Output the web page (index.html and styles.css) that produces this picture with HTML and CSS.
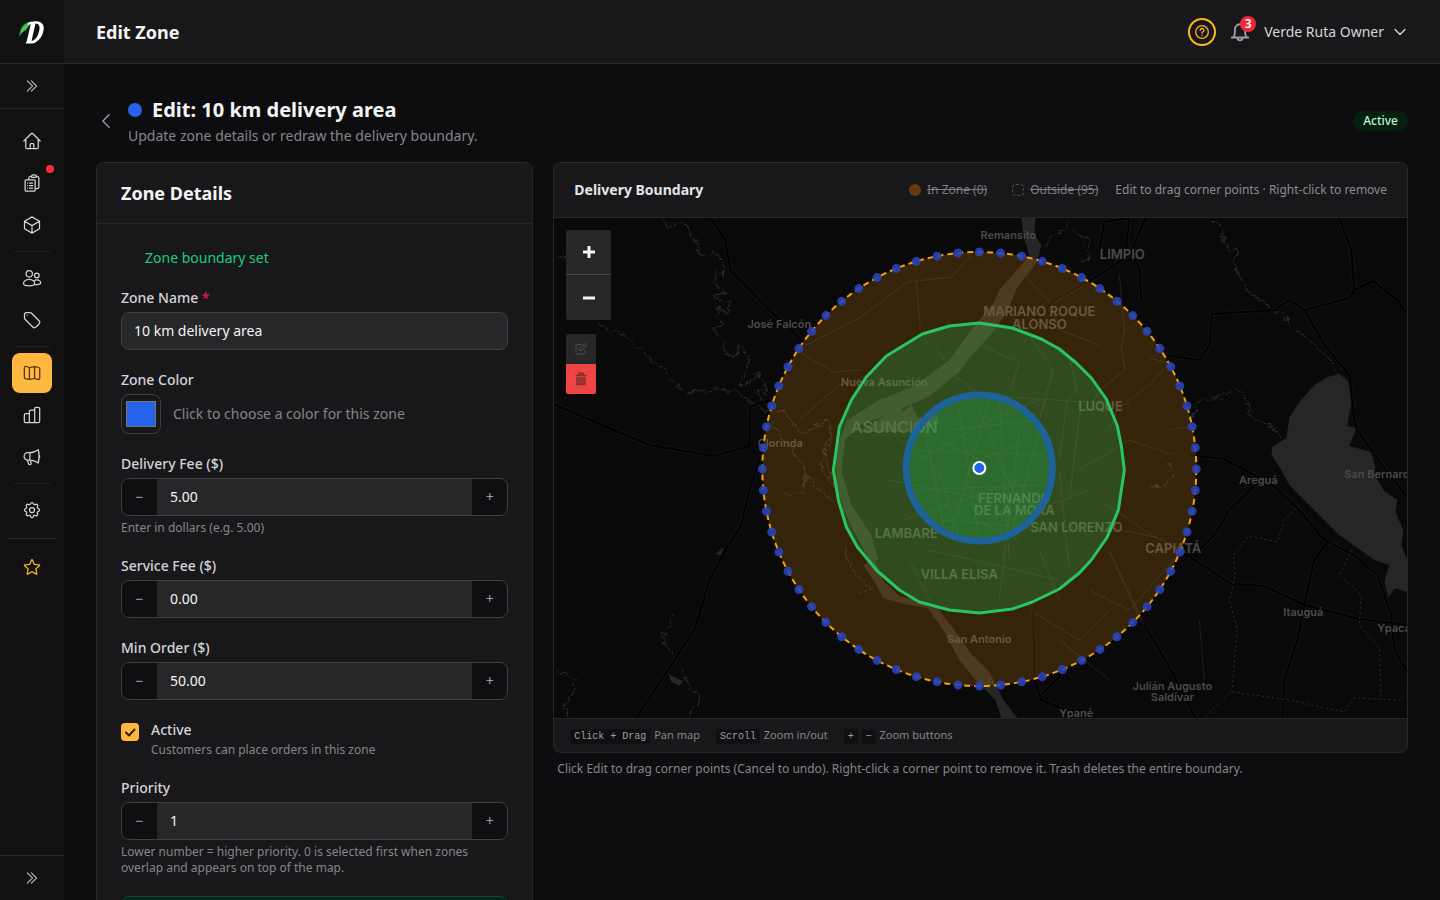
FILE: index.html
```html
<!DOCTYPE html>
<html lang="en">
<head>
<meta charset="utf-8">
<title>Edit Zone</title>
<meta name="viewport" content="width=device-width, initial-scale=1">
<link rel="stylesheet" href="styles.css">
</head>
<body>
<div class="app">
  <aside class="sidebar">
    <a class="logo" href="#" aria-label="Home">
      <svg width="26" height="26" viewBox="0 0 26 26" aria-hidden="true">
        <path d="M0.500 18C0 10 4 3 13 2.500C11 5 9 9 7 11C4.500 13 2 14 0.500 18Z" fill="#2f9e44"/>
        <path d="M1.500 14C3 9 6 5 12 3C9 7 6 11 1.500 14Z" fill="#55c95f"/>
        <path fill-rule="evenodd" d="M9 4C13 1.500 23 1 24.500 7C26 14 20 24 13 24.500H6.500C9 22 11 13 12.500 5.500C11.500 5 10.500 5 9 6ZM16.500 4.500L12.500 22C17 22 21 13 20.500 8C20.200 5.500 18.500 4.500 16.500 4.500Z" fill="#fff"/>
        <path d="M13.500 4L9 23.500" stroke="#fff" stroke-width="3"/>
      </svg>
    </a>
    <button class="expand" type="button" aria-label="Expand sidebar">
      <svg class="icon-sm" viewBox="0 0 24 24"><path d="m5.250 4.500 7.500 7.500-7.500 7.500m6-15 7.500 7.500-7.500 7.500"/></svg>
    </button>
    <nav class="nav">
      <a class="nav-item" href="#" aria-label="Dashboard"><svg class="icon" viewBox="0 0 24 24"><path d="m2.250 12 8.954-8.955c.44-.439 1.152-.439 1.591 0L21.750 12M4.500 9.750v10.125c0 .621.504 1.125 1.125 1.125H9.750v-4.875c0-.621.504-1.125 1.125-1.125h2.250c.621 0 1.125.504 1.125 1.125V21h4.125c.621 0 1.125-.504 1.125-1.125V9.750M8.250 21h8.250"/></svg></a>
      <a class="nav-item" href="#" aria-label="Orders"><svg class="icon" viewBox="0 0 24 24"><path d="M9 12h3.750M9 15h3.750M9 18h3.750m3 .75H18a2.250 2.250 0 0 0 2.250-2.250V6.108c0-1.135-.845-2.098-1.976-2.192a48.424 48.424 0 0 0-1.123-.08m-5.801 0c-.065.21-.1.433-.1.664 0 .414.336.75.75.75h4.500a.75.75 0 0 0 .75-.75 2.250 2.250 0 0 0-.1-.664m-5.800 0A2.251 2.251 0 0 1 13.500 2.250H15c1.012 0 1.867.668 2.150 1.586m-5.800 0c-.376.023-.75.05-1.124.08C9.095 4.010 8.250 4.973 8.250 6.108V8.250m0 0H4.875c-.621 0-1.125.504-1.125 1.125v11.250c0 .621.504 1.125 1.125 1.125h9.750c.621 0 1.125-.504 1.125-1.125V9.375c0-.621-.504-1.125-1.125-1.125H8.250ZM6.750 12h.008v.008H6.750V12Zm0 3h.008v.008H6.750V15Zm0 3h.008v.008H6.750V18Z"/></svg><span class="nav-dot"></span></a>
      <a class="nav-item" href="#" aria-label="Products"><svg class="icon" viewBox="0 0 24 24"><path d="m21 7.500-9-5.250L3 7.500m18 0-9 5.250m9-5.250v9l-9 5.250M3 7.500l9 5.250M3 7.500v9l9 5.250m0-9v9"/></svg></a>
      <hr class="nav-sep">
      <a class="nav-item" href="#" aria-label="Customers"><svg class="icon" viewBox="0 0 24 24"><circle cx="8.700" cy="7" r="3.800"/><circle cx="17.800" cy="9" r="2.800"/><path d="M8.500 13.500C4.500 13.500 1.800 16.200 1.800 18.700C1.800 20.500 4.500 21.400 8.500 21.400S15.200 20.500 15.200 18.700C15.200 16.200 12.500 13.500 8.500 13.500ZM14.300 15.400C15.300 14.600 16.600 14.200 17.800 14.200C20.400 14.200 22.400 16 22.400 17.800C22.400 19.300 20.300 19.900 17.800 19.900C16.800 19.900 15.800 19.800 15 19.600"/></svg></a>
      <a class="nav-item" href="#" aria-label="Promotions"><svg class="icon" viewBox="0 0 24 24"><path d="M9.568 3H5.250A2.250 2.250 0 0 0 3 5.250v4.318c0 .597.237 1.170.659 1.591l9.581 9.581c.699.699 1.780.872 2.607.33a18.095 18.095 0 0 0 5.223-5.223c.542-.827.369-1.908-.33-2.607L11.160 3.660A2.250 2.250 0 0 0 9.568 3Z"/><path d="M6 6h.008v.008H6V6Z"/></svg></a>
      <hr class="nav-sep">
      <a class="nav-item nav-item-active" href="#" aria-label="Zones" aria-current="page"><svg class="icon" viewBox="0 0 24 24"><path d="M8.900 5.400V19.600M15.100 4.400V18.600M2.800 6C2.800 4.500 3.800 3.700 5 4.100L8.900 5.400L15.100 4.400L19.600 5.100C20.800 5.300 21.300 6 21.300 7.200V18C21.300 19.400 20.400 20 19.200 19.700L15.100 18.600L8.900 19.600L4.600 19C3.400 18.800 2.800 18 2.800 16.800Z"/></svg></a>
      <a class="nav-item" href="#" aria-label="Reports"><svg class="icon" viewBox="0 0 24 24"><path d="M8.800 21.200H4.600C3.400 21.200 2.800 20.600 2.800 19.400V12.200C2.800 11 3.400 10.400 4.600 10.400H8.800M8.800 21.200V8C8.800 6.800 9.400 6.200 10.600 6.200H15.200M8.800 21.200H15.200M15.200 21.200V4.600C15.200 3.400 15.800 2.800 17 2.800H19.400C20.600 2.800 21.200 3.400 21.200 4.600V19.400C21.200 20.600 20.600 21.200 19.400 21.200Z"/></svg></a>
      <a class="nav-item" href="#" aria-label="Marketing"><svg class="icon" viewBox="0 0 24 24"><path d="M9.500 6.700H7A4.500 4.500 0 0 0 7 15.700H9.500C13 15.700 16.500 17 19.500 19.200C20.800 14 20.800 8 19.500 3.200C16.500 5.400 13 6.700 9.500 6.700ZM9.500 6.700V15.700M6.800 15.700C7 17.800 7.500 19.400 8.300 20.800C9 21.800 11.500 20.800 11 19.500C10.500 18.400 10.200 17 10.200 15.700M20.400 9.500C21.500 10.300 21.500 12.200 20.400 13"/></svg></a>
      <hr class="nav-sep">
      <a class="nav-item" href="#" aria-label="Settings"><svg class="icon" viewBox="0 0 24 24"><path d="M10.325 4.317c.426-1.756 2.924-1.756 3.350 0a1.724 1.724 0 0 0 2.573 1.066c1.543-.94 3.310.826 2.370 2.370a1.724 1.724 0 0 0 1.065 2.572c1.756.426 1.756 2.924 0 3.350a1.724 1.724 0 0 0-1.066 2.573c.94 1.543-.826 3.310-2.370 2.370a1.724 1.724 0 0 0-2.572 1.065c-.426 1.756-2.924 1.756-3.350 0a1.724 1.724 0 0 0-2.573-1.066c-1.543.94-3.310-.826-2.370-2.370a1.724 1.724 0 0 0-1.065-2.572c-1.756-.426-1.756-2.924 0-3.350a1.724 1.724 0 0 0 1.066-2.573c-.94-1.543.826-3.310 2.370-2.370c1 .608 2.296.07 2.572-1.065z"/><circle cx="12" cy="12" r="3"/></svg></a>
    </nav>
    <div class="favorites">
      <button class="nav-item nav-item-star" type="button" aria-label="Favorites"><svg class="icon" viewBox="0 0 24 24"><path d="M11.480 3.499a.562.562 0 0 1 1.040 0l2.125 5.111a.563.563 0 0 0 .475.345l5.518.442c.499.04.701.663.321.988l-4.204 3.602a.563.563 0 0 0-.182.557l1.285 5.385a.562.562 0 0 1-.84.61l-4.725-2.885a.562.562 0 0 0-.586 0L6.982 20.540a.562.562 0 0 1-.84-.61l1.285-5.386a.562.562 0 0 0-.182-.557l-4.204-3.602a.562.562 0 0 1 .321-.988l5.518-.442a.563.563 0 0 0 .475-.345L11.480 3.500Z"/></svg></button>
    </div>
    <button class="expand expand-bottom" type="button" aria-label="Expand menu">
      <svg class="icon-sm" viewBox="0 0 24 24"><path d="m5.250 4.500 7.500 7.500-7.500 7.500m6-15 7.500 7.500-7.500 7.500"/></svg>
    </button>
  </aside>

  <div class="content">
    <header class="topbar">
      <h1 class="topbar-title">Edit Zone</h1>
      <div class="topbar-actions">
        <button class="help" type="button" aria-label="Help"><svg class="icon-sm" viewBox="0 0 24 24"><circle cx="12" cy="12" r="9.500"/><path d="M9.200 9.400C9.400 5.900 14.800 6 14.800 9.300C14.800 11.400 12 11.600 12 13.800M12 16.800v.2"/></svg></button>
        <button class="bell" type="button" aria-label="Notifications"><svg class="icon-bell" viewBox="0 0 24 24"><path d="M3 18H21M5.500 18V16.500C6 15.500 6.500 13 6.500 10.500V9A5.500 5.500 0 0 1 17.500 9V10.500C17.500 13 18 15.500 18.500 16.500V18M9.200 18.500C9.600 22 14.400 22 14.800 18.500"/></svg><span class="bell-count">3</span></button>
        <button class="account" type="button">Verde Ruta Owner<svg class="icon-sm" viewBox="0 0 24 24"><path d="m19.500 8.250-7.500 7.500-7.500-7.500"/></svg></button>
      </div>
    </header>

    <main class="main">
      <div class="page-head">
        <a class="back" href="#" aria-label="Back"><svg class="icon" viewBox="0 0 24 24"><path d="M15.750 19.500 8.250 12l7.500-7.500"/></svg></a>
        <div class="page-titles">
          <h2 class="page-title"><span class="zone-dot"></span>Edit: 10 km delivery area</h2>
          <p class="page-sub">Update zone details or redraw the delivery boundary.</p>
        </div>
        <span class="badge">Active</span>
      </div>

      <div class="columns">
        <section class="card details">
          <h3 class="details-title">Zone Details</h3>
          <form class="details-body">
            <p class="boundary-ok">Zone boundary set</p>
            <div class="field">
              <label for="name">Zone Name <span class="required">*</span></label>
              <input class="text-input" id="name" type="text" value="10 km delivery area">
            </div>
            <div class="field">
              <label for="color">Zone Color</label>
              <div class="color-row">
                <input class="swatch" id="color" type="color" value="#2563eb">
                <span>Click to choose a color for this zone</span>
              </div>
            </div>
            <div class="field">
              <label for="fee">Delivery Fee ($)</label>
              <div class="stepper"><button type="button" aria-label="Decrease delivery fee">−</button><input id="fee" type="text" value="5.00"><button type="button" aria-label="Increase delivery fee">+</button></div>
              <p class="hint">Enter in dollars (e.g. 5.00)</p>
            </div>
            <div class="field">
              <label for="service">Service Fee ($)</label>
              <div class="stepper"><button type="button" aria-label="Decrease service fee">−</button><input id="service" type="text" value="0.00"><button type="button" aria-label="Increase service fee">+</button></div>
            </div>
            <div class="field">
              <label for="min">Min Order ($)</label>
              <div class="stepper"><button type="button" aria-label="Decrease minimum order">−</button><input id="min" type="text" value="50.00"><button type="button" aria-label="Increase minimum order">+</button></div>
            </div>
            <div class="check-row">
              <span class="check">
                <input id="active" type="checkbox" checked>
                <svg viewBox="0 0 18 18" aria-hidden="true"><path d="M5 9.500 8 12.500 13.500 6.500"/></svg>
              </span>
              <div class="check-text">
                <label for="active">Active</label>
                <p class="hint">Customers can place orders in this zone</p>
              </div>
            </div>
            <div class="field">
              <label for="priority">Priority</label>
              <div class="stepper"><button type="button" aria-label="Decrease priority">−</button><input id="priority" type="text" value="1"><button type="button" aria-label="Increase priority">+</button></div>
              <p class="hint">Lower number = higher priority. 0 is selected first when zones overlap and appears on top of the map.</p>
            </div>
            <div class="notice"></div>
          </form>
        </section>

        <div class="boundary">
          <section class="card">
            <div class="map-head">
              <h3 class="map-title">Delivery Boundary</h3>
              <div class="legend">
                <button class="legend-item" type="button"><span class="legend-in"></span><s>In Zone (0)</s></button>
                <button class="legend-item" type="button"><span class="legend-out"></span><s>Outside (95)</s></button>
                <span class="legend-note">Edit to drag corner points · Right-click to remove</span>
              </div>
            </div>
            <div class="map">
              <svg class="map-canvas" viewBox="554 218 854 500" preserveAspectRatio="xMidYMid slice" role="img" aria-label="Delivery zone map">
                <defs>
                  <filter id="meander" x="-5%" y="-5%" width="110%" height="110%">
                    <feTurbulence type="turbulence" baseFrequency="0.09" numOctaves="2" seed="4"/>
                    <feDisplacementMap in="SourceGraphic" scale="9" xChannelSelector="R" yChannelSelector="G"/>
                  </filter>
                </defs>
                <rect class="land" x="0" y="0" width="2000" height="1000"/>
                <g class="stream" filter="url(#meander)">
                  <path d="M662 218L667 225L674 221L686 224L689 234L697 242L695 250L703 254L711 251L722 261L722 275L714 267L712 276L718 284L724 290L714 292L720 300L728 298L726 312L718 306L715 316L723 322L713 326L719 335L725 341L722 350L735 354L738 344L747 354L744 366L738 381L744 384L756 371L766 390L754 388L763 400"/>
                  <path d="M554 255L564 253M597 321L604 329L622 331L634 344L648 357L664 367L672 382L684 391L696 388L710 391L716 385L728 389L735 387L747 398L756 405L760 398"/>
                  <path d="M673 617L664 629L662 640L670 650L673 660L682 668L684 680L692 688L698 692L696 702L688 708L686 718M554 670L567 671L575 679L570 692L564 704L568 718"/>
                  <path d="M1208 218L1219 223L1221 236L1228 248L1237 249L1233 263L1238 275L1245 286L1255 295L1270 306L1281 313L1290 323L1303 334L1318 349L1330 359L1337 375"/>
                  <path d="M1190 417L1198 398L1223 395L1235 386L1245 398L1250 412L1268 424L1284 436"/>
                  <path d="M1045 245L1048 234L1060 228L1071 218M1070 228L1088 240L1086 258L1080 262M760 408L785 410L792 422L800 432L826 418L830 440L818 460L826 480L838 490"/>
                  <path d="M1165 460L1172 474L1160 484L1146 482M870 540L856 520L832 500L815 485L807 473L800 490L786 492M842 545L852 570L870 588L856 590M832 430L822 450L830 480L850 510L866 548M770 420L785 440L800 460L806 480"/>
                </g>
                <g class="water">
                  <path d="M1022 218L1036 218L1035 235L1042 245L1038 262L1018 287L1008 312L992 334L970 358L960 372L930 396L890 414L862 424L846 440L842 470L852 505L872 535L879 560L870 560L850 522L838 490L836 450L848 420L880 400L915 386L950 360L975 326L995 302L1000 290L1030 256L1024 235Z"/>
                  <path d="M874 556L884 581L900 596L936 605L955 630L972 654L990 672L1004 700L1018 718L1002 718L996 700L978 682L960 660L944 630L928 608L904 604L884 598L874 580L864 566Z"/>
                  <path d="M860 432L885 416L897 398L904 412L912 404L920 420L935 408L940 424L910 432Z"/>
                  <path d="M1328 377L1340 374L1349 381L1353 397L1348 426L1357 428L1350 446L1372 452L1376 468L1375 474L1384 490L1398 500L1396 512L1404 530L1402 545L1408 560V592L1396 588L1389 597L1385 582L1390 565L1375 560L1340 535L1315 510L1290 485L1281 468L1272 455L1273 447L1287 438L1290 418L1300 402L1315 385Z"/>
                  <path d="M669 674L683 681L686 679L680 686L672 682ZM716 554L724 547L722 555Z"/>
                </g>
                <g class="minor">
                  <path d="M800 352L834 372L862 370M800 420L840 385L870 375M1120 275L1125 330L1122 350L1126 370L1100 390L1090 410M1140 320L1125 332M1150 358L1170 363L1150 385L1130 400L1118 410L1110 430M1020 320L1054 370L1040 420M980 345L1020 362L1010 395M935 345L955 375L980 395L1130 405M1068 350L1078 392L1068 400L1060 460M1080 470L1130 440L1175 455M1170 430L1200 425M1030 610L1080 640L1110 610M1040 550L1060 600M1110 550L1145 625M1090 590L1130 610L1175 560M1060 640L1110 680M1100 500L1160 540M1200 620L1205 680"/>
                  <path d="M805 346L860 318L908 282L952 277L972 255M917 282L921 330M1020 270L1052 304L1085 285M1052 304L1060 330L1100 345M1112 528L1160 538L1182 552M1110 552L1142 622"/>
                  <path d="M900 440L940 470L960 540M920 430L1000 470L1040 500M930 480L1030 440M905 520L1050 470M960 410L980 540M1000 400L1010 560M940 520L1060 530M890 480L990 500M1020 430L1000 600M1060 470L1070 570M930 550L1060 580M1082 400L1070 500M910 560L930 600M1010 520L1090 490M950 430L1040 420M930 500L1020 540M920 460L990 420L1040 400M915 450L1045 455M925 425L945 530M975 400L1030 530M990 400L950 540M1040 430L1010 540M910 490L1045 485"/>
                </g>
                <g class="road">
                  <path d="M711 218L726 240L731 270L770 310L803 341"/>
                  <path d="M554 404L600 424L650 445L715 456L750 446L751 407L770 400"/>
                  <path d="M760 460L750 490L742 525L726 550L710 580L696 628L675 660L637 718"/>
                  <path d="M1100 250L1105 222L1130 218M1146 218L1135 245L1130 255L1100 275L1056 300L1030 325M1130 218L1127 245L1140 268L1142 300"/>
                  <path d="M1340 218L1352 250L1355 290L1374 281L1400 302L1404 310M1355 290L1350 298L1305 310L1290 300L1275 310L1213 314L1210 345L1200 360L1185 358L1165 355M1305 310L1325 345L1350 375L1355 420L1358 430L1375 455L1410 500"/>
                  <path d="M1184 553L1232 584L1265 586L1305 605L1360 619L1410 625M1190 455L1225 459L1272 484L1300 510L1325 540L1355 555L1378 575L1392 615"/>
                  <path d="M1257 484L1230 510L1215 535L1200 550M1328 543L1315 560L1305 605L1298 640L1285 680L1283 718M1392 615L1395 650L1408 672"/>
                  <path d="M1145 625L1160 650L1185 695L1196 718M1034 610L1035 680L1042 700L1070 712M1042 695L1062 675"/>
                </g>
                <g class="border-line">
                  <path d="M1300 505L1285 520L1278 542L1250 536L1234 555L1236 575L1230 600L1238 630L1235 660L1233 690L1205 718M1233 692L1290 700L1345 712L1355 698L1400 700L1408 692M1355 545L1340 575L1362 595L1360 625L1380 648L1382 700"/>
                </g>
                <g class="labels">
                  <text x="1009" y="239">Remansito</text>
                  <text x="780" y="328">José Falcón</text>
                  <text x="885" y="386">Nueva Asunción</text>
                  <text x="781" y="447">Clorinda</text>
                  <text x="1259" y="484">Areguá</text>
                  <text class="start" x="1345" y="478">San Bernardino</text>
                  <text x="1304" y="616">Itauguá</text>
                  <text class="start" x="1378" y="632">Ypacaraí</text>
                  <text x="1173" y="690">Julián Augusto</text>
                  <text x="1173" y="701">Saldívar</text>
                  <text x="1077" y="717">Ypané</text>
                  <text x="980" y="643">San Antonio</text>
                  <g class="city">
                    <text x="1123" y="259">LIMPIO</text>
                    <text x="1040" y="316">MARIANO ROQUE</text>
                    <text x="1040" y="329">ALONSO</text>
                    <text x="1101" y="411">LUQUE</text>
                    <text x="907" y="538">LAMBARÉ</text>
                    <text x="960" y="579">VILLA ELISA</text>
                    <text x="1015" y="503">FERNANDO</text>
                    <text x="1015" y="515">DE LA MORA</text>
                    <text x="1077" y="532">SAN LORENZO</text>
                    <text x="1174" y="553">CAPIATÁ</text>
                  </g>
                  <text class="capital" x="895" y="433">ASUNCIÓN</text>
                </g>
                <circle class="zone-outer" cx="980" cy="469" r="217"/>
                <polygon class="zone-mid" points="980,323 1013,328 1042,339 1060,349 1077,363 1092,378 1107,399 1118,426 1122,446 1125,470 1119,510 1108,537 1092,560 1080,573 1060,589 1033,602 1013,609 980,613 950,610 920,602 900,590 878,571 858,547 847,527 839,500 834,470 836,456 840,427 852,400 867,377 887,356 923,334 950,326"/>
                <circle class="zone-inner" cx="980" cy="468" r="73"/>
                <circle class="zone-vertices" cx="980" cy="469" r="217" pathLength="64"/>
                <circle class="store" cx="980" cy="468" r="6"/>
              </svg>
              <div class="map-controls">
                <div class="zoom-controls">
                  <button type="button" aria-label="Zoom in"><svg viewBox="0 0 14 14"><path d="M7 1V13M1 7H13"/></svg></button>
                  <button type="button" aria-label="Zoom out"><svg viewBox="0 0 14 14"><path d="M1 7H13"/></svg></button>
                </div>
                <div class="edit-controls">
                  <button class="edit-shape" type="button" aria-label="Edit boundary"><svg viewBox="0 0 14 14"><path d="M7.500 2.500H3.200Q2 2.500 2 3.700V10.800Q2 12 3.200 12H9.800Q11 12 11 10.800V8M5.500 8.800L6 6.500L11 1.500L12.800 3.200L7.800 8.200Z"/></svg></button>
                  <button class="delete-shape" type="button" aria-label="Delete boundary"><svg viewBox="0 0 14 14"><path d="M1.500 3.500H12.500M5 3V1.200H9V3M3 5V12.500H11V5M5 5V12M7 5V12M9 5V12"/></svg></button>
                </div>
              </div>
            </div>
            <div class="map-foot">
              <span><kbd>Click + Drag</kbd> Pan map</span>
              <span><kbd>Scroll</kbd> Zoom in/out</span>
              <span><kbd>+</kbd> <kbd>−</kbd> Zoom buttons</span>
            </div>
          </section>
          <p class="hint boundary-hint">Click Edit to drag corner points (Cancel to undo). Right-click a corner point to remove it. Trash deletes the entire boundary.</p>
        </div>
      </div>
    </main>
  </div>
</div>
</body>
</html>
```

FILE: styles.css
```css
*, *::before, *::after { box-sizing: border-box; }
body {
  margin: 0;
  background: #0d0d0f;
  color: #f4f4f5;
  font-family: "Noto Sans", sans-serif;
  font-size: 14px;
  line-height: 20px;
}
h1, h2, h3, p { margin: 0; }
button, input { font: inherit; color: inherit; }
button { border: 0; padding: 0; background: none; cursor: pointer; }
a { color: inherit; }
svg { display: block; fill: none; }
.icon, .icon-sm, .icon-bell {
  stroke: currentColor;
  stroke-width: 1.5;
  stroke-linecap: round;
  stroke-linejoin: round;
}
.icon { width: 20px; height: 20px; }
.icon-sm { width: 16px; height: 16px; stroke-width: 2; }
.icon-bell { width: 22px; height: 22px; stroke-width: 2; }

.app { display: flex; height: 100vh; overflow: hidden; }

.sidebar {
  flex: none;
  display: flex;
  flex-direction: column;
  width: 64px;
  background: #111112;
  color: #d4d4d8;
}
.logo {
  display: grid;
  place-items: center;
  height: 64px;
  border-bottom: 1px solid #2a2a2d;
}
.expand {
  display: grid;
  place-items: center;
  height: 45px;
  border-bottom: 1px solid #2a2a2d;
  color: #9f9fa9;
}
.expand-bottom { margin-top: auto; border-top: 1px solid #2a2a2d; border-bottom: 0; }
.nav { display: flex; flex-direction: column; align-items: center; gap: 2px; padding: 12px 0 8px; }
.nav-item {
  position: relative;
  display: grid;
  place-items: center;
  width: 40px;
  height: 40px;
  border-radius: 8px;
}
.nav-item-active { background: #ffb83d; color: #4a3410; }
.nav-item-star { color: #fdb913; }
.nav-dot {
  position: absolute;
  top: 2px;
  right: -2px;
  width: 8px;
  height: 8px;
  border-radius: 50%;
  background: #fb2c36;
}
.nav-sep { width: 36px; height: 1px; margin: 4px 0; border: 0; background: #222224; }
.favorites {
  display: flex;
  justify-content: center;
  margin: 0 8px;
  padding-top: 8px;
  border-top: 1px solid #2a2a2d;
}

.content { flex: 1; min-width: 0; display: flex; flex-direction: column; }
.topbar {
  flex: none;
  display: flex;
  align-items: center;
  justify-content: space-between;
  height: 64px;
  padding: 0 32px;
  background: #18181a;
  border-bottom: 1px solid #2a2a2d;
}
.topbar-title { font-size: 18px; line-height: 28px; font-weight: 700; }
.topbar-actions { display: flex; align-items: center; gap: 12px; }
.help {
  display: grid;
  place-items: center;
  width: 28px;
  height: 28px;
  border: 2px solid #fdb913;
  border-radius: 50%;
  color: #fdb022;
}
.bell { position: relative; display: grid; place-items: center; width: 24px; height: 28px; color: #9f9fa9; }
.bell-count {
  position: absolute;
  top: -2px;
  right: -4px;
  width: 16px;
  border-radius: 8px;
  background: #f0283a;
  color: #fff;
  font-size: 12px;
  line-height: 16px;
  font-weight: 600;
}
.account { display: flex; align-items: center; gap: 8px; color: #d4d4d8; }

.main { flex: 1; min-height: 0; padding: 32px; overflow-y: auto; scrollbar-width: none; }
.page-head { display: flex; align-items: center; margin-bottom: 16px; }
.back { display: block; width: 32px; color: #9f9fa9; }
.page-titles { flex: 1; }
.page-title { display: flex; align-items: center; gap: 10px; font-size: 20px; line-height: 28px; font-weight: 700; }
.zone-dot { width: 14px; height: 14px; border-radius: 50%; background: #2563eb; }
.page-sub { margin-top: 2px; color: #85858d; }
.badge {
  padding: 2px 10px;
  border-radius: 10px;
  background: #05200f;
  color: #b9f8cf;
  font-size: 12px;
  line-height: 16px;
  font-weight: 500;
}

.columns { display: grid; grid-template-columns: 1fr 2fr; align-items: start; }
.card { border: 1px solid #27272a; border-radius: 8px; background: #18181a; overflow: hidden; }
.details-title {
  padding: 16px 24px;
  border-bottom: 1px solid #27272a;
  font-size: 18px;
  line-height: 28px;
  font-weight: 700;
}
.details-body { display: flex; flex-direction: column; gap: 20px; padding: 24px; }
.boundary-ok { padding-left: 24px; color: #1ccb82; }
.field { display: flex; flex-direction: column; gap: 4px; }
label { font-weight: 500; color: #d4d4d8; }
.required { color: #e11d48; }
.text-input {
  width: 100%;
  height: 38px;
  padding: 0 12px 1px;
  border: 1px solid #3f3f43;
  border-radius: 8px;
  background: #27272a;
}
.color-row { display: flex; align-items: center; gap: 12px; color: #85858d; }
.swatch {
  width: 40px;
  height: 40px;
  padding: 2px;
  border: 1px solid #3f3f43;
  border-radius: 8px;
  background: #18181a;
}
.stepper {
  display: flex;
  height: 38px;
  border: 1px solid #3f3f43;
  border-radius: 8px;
  background: #27272a;
  overflow: hidden;
}
.stepper button { flex: none; width: 35px; background: #0f0f11; color: #9f9fa9; }
.stepper input { flex: 1; min-width: 0; padding: 0 13px; border: 0; background: none; }
.hint { font-size: 12px; line-height: 16px; color: #85858d; }
.check-row { display: flex; gap: 12px; }
.check { position: relative; flex: none; width: 18px; height: 18px; margin-top: 3px; }
.check input {
  appearance: none;
  display: block;
  width: 18px;
  height: 18px;
  margin: 0;
  border-radius: 4px;
  background: #ffb83d;
}
.check svg {
  position: absolute;
  inset: 0;
  stroke: #2b2110;
  stroke-width: 2;
  stroke-linecap: round;
  stroke-linejoin: round;
  pointer-events: none;
}
.check-text { display: flex; flex-direction: column; gap: 2px; }
.notice { height: 48px; border: 1px solid #0b4a35; border-radius: 8px; background: #06251a; }

.boundary { margin-left: 20px; }
.map-head {
  display: flex;
  align-items: center;
  justify-content: space-between;
  padding: 17px 20px;
  border-bottom: 1px solid #27272a;
}
.map-title { font-size: 14px; line-height: 20px; font-weight: 700; color: #e4e4e7; }
.legend { display: flex; align-items: center; gap: 9px; font-size: 12px; line-height: 16px; color: #8c8c95; }
.legend-item { display: flex; align-items: center; gap: 6px; padding: 0 8px; color: #7c7c84; }
.legend-in, .legend-out { width: 12px; height: 12px; border-radius: 50%; }
.legend-in { background: #683a10; }
.legend-out { border: 1px dashed #4b4b52; border-radius: 4px; }

.map { position: relative; height: 500px; background: #090909; }
.map-canvas { width: 100%; height: 100%; }
.land { fill: #090909; }
.stream { stroke: #2e2e2e; stroke-width: 1; stroke-linejoin: round; }
.water { fill: #262626; }
.minor { stroke: #1f1f1f; stroke-width: 1; }
.road { stroke: #000; stroke-width: 2; filter: drop-shadow(0 0 1px #1c1c1c); }
.border-line { stroke: #303030; stroke-width: 1; stroke-dasharray: 2 3; }
.labels {
  fill: #4b4b4b;
  font-family: Inter, sans-serif;
  font-size: 11px;
  font-weight: 600;
  text-anchor: middle;
}
.labels .start { text-anchor: start; }
.labels .city { font-size: 13px; }
.labels .capital { font-size: 16px; }
.zone-outer { fill: #e6920a; fill-opacity: 0.2; stroke: #f5a10b; stroke-width: 2; stroke-dasharray: 6 4; }
.zone-mid { fill: #22c55e; fill-opacity: 0.25; stroke: #28c660; stroke-width: 3; stroke-linejoin: round; }
.zone-inner { fill: #22c55e; fill-opacity: 0.25; stroke: #1d6299; stroke-width: 7; }
.zone-vertices { stroke: #2743b8; stroke-opacity: 0.9; stroke-width: 9; stroke-linecap: round; stroke-dasharray: 0 1; }
.store { fill: #2563eb; stroke: #fff; stroke-width: 2; }

.map-controls { position: absolute; top: 12px; left: 12px; display: flex; flex-direction: column; gap: 14px; align-items: flex-start; }
.zoom-controls, .edit-controls { display: flex; flex-direction: column; border-radius: 2px; overflow: hidden; }
.zoom-controls button { display: grid; place-items: center; width: 45px; height: 45px; background: #27272a; }
.zoom-controls button:first-child { border-bottom: 1px solid #48484c; }
.zoom-controls svg { width: 14px; height: 14px; stroke: #f4f4f5; stroke-width: 3; }
.edit-controls button { display: grid; place-items: center; width: 30px; height: 30px; }
.edit-controls svg { width: 14px; height: 14px; }
.edit-shape { background: #27272a; }
.edit-shape svg { stroke: #515154; }
.delete-shape { background: #ef4444; }
.delete-shape svg { stroke: #852c2c; stroke-width: 1.5; }

.map-foot {
  display: flex;
  gap: 12px;
  padding: 8px 16px;
  border-top: 1px solid #27272a;
  color: #85858d;
  font-size: 11px;
  line-height: 17px;
}
.map-foot { gap: 16px; padding: 8px 16px; line-height: 16px; }
.map-foot span { height: 17px; }
kbd {
  margin-right: 1px;
  padding: 2px 4px;
  border-radius: 2px;
  background: #101012;
  color: #9f9fa9;
  font-family: "Liberation Mono", monospace;
  font-size: 10px;
}
.boundary-hint { margin: 8px 4px 0; }
```
